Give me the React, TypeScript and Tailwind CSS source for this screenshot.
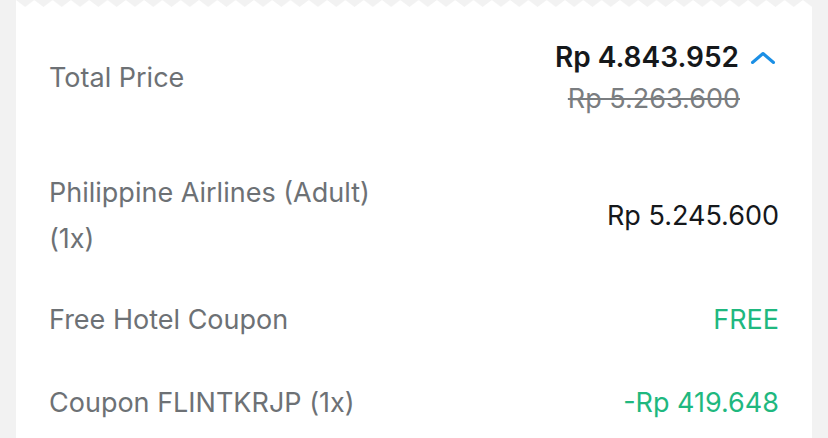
const font = { fontFamily: "Inter, 'Noto Sans', sans-serif" };

function Zigzag() {
  return (
    <svg className="block h-[7px] w-full" preserveAspectRatio="none">
      <defs>
        <pattern id="teeth" width="18.3" height="7" patternUnits="userSpaceOnUse">
          <path d="M0 0 L9.15 7 L18.3 0 Z" fill="#f2f2f2" />
        </pattern>
      </defs>
      <rect width="100%" height="7" fill="url(#teeth)" />
    </svg>
  );
}

function Row({ label, children, className = "" }: { label: React.ReactNode; children: React.ReactNode; className?: string }) {
  return (
    <div className={`flex items-center justify-between ${className}`}>
      <div className="text-[27px] leading-[46px] text-[#6d7175]">{label}</div>
      <div className="text-right">{children}</div>
    </div>
  );
}

export default function App() {
  return (
    <div className="h-[438px] w-[828px] overflow-hidden bg-[#f2f2f2] px-4" style={font}>
      <div className="h-full bg-white">
        <Zigzag />
        <div className="px-[33px] pt-[29px]">
          <Row label="Total Price">
            <div className="flex items-center justify-end gap-[11px] text-[28px] leading-[42px] font-semibold text-[#15181b]">
              Rp 4.843.952
              <svg width="26" height="14" viewBox="0 0 26 14" className="mr-[3px] mt-[2px]">
                <polyline
                  points="2.5,11.5 13,2.5 23.5,11.5"
                  fill="none"
                  stroke="#1b8fe5"
                  strokeWidth="3"
                  strokeLinecap="round"
                  strokeLinejoin="round"
                />
              </svg>
            </div>
            <div className="pr-[39px] text-[27px] leading-[42px] text-[#7a7d80] line-through decoration-[2px]">
              Rp 5.263.600
            </div>
          </Row>

          <Row className="mt-[50px]" label={<>Philippine Airlines (Adult)<br />(1x)</>}>
            <div className="text-[27px] leading-[46px] text-[#15181b]">Rp 5.245.600</div>
          </Row>

          <Row className="mt-[35px]" label="Free Hotel Coupon">
            <div className="text-[27px] leading-[46px] text-[#1fb87f]">FREE</div>
          </Row>

          <Row className="mt-[37px]" label="Coupon FLINTKRJP (1x)">
            <div className="text-[27px] leading-[46px] text-[#1fb87f]">-Rp 419.648</div>
          </Row>
        </div>
      </div>
    </div>
  );
}
